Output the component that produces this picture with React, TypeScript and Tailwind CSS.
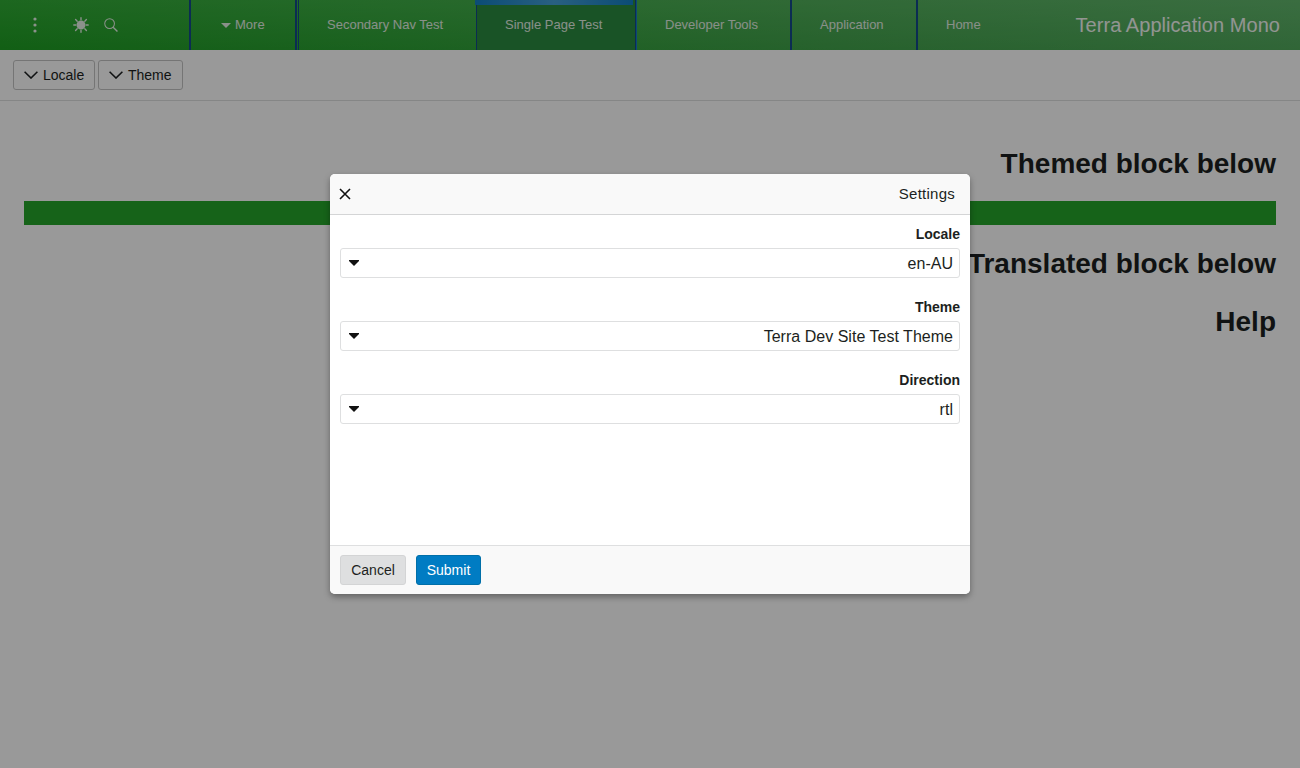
import React from "react";

const font = "font-['Liberation_Sans',Arial,sans-serif]";

function Tab({ label, className = "", children }: { label: string; className?: string; children?: React.ReactNode }) {
  return (
    <div className={`relative flex h-full items-center text-[13px] text-[#e4f0e4] ${className}`}>
      {children}
      {label}
    </div>
  );
}

function Chevron() {
  return (
    <svg width="14" height="8" viewBox="0 0 14 8" fill="none" stroke="currentColor" strokeWidth="1.6">
      <path d="M0.6 0.8 L7 7 L13.4 0.8" />
    </svg>
  );
}

function ToolButton({ label, className }: { label: string; className: string }) {
  return (
    <button className={`flex h-[30px] items-center gap-[5px] rounded-[3px] border border-[#c4c4c4] bg-white pl-[10px] text-[14px] text-[#1c1f21] ${className}`}>
      <Chevron />
      {label}
    </button>
  );
}

function Field({ label, value, className = "" }: { label: string; value: string; className?: string }) {
  return (
    <div className={className}>
      <div className="h-[23px] text-right text-[14px] leading-[18px] font-bold text-[#1c1f21]">{label}</div>
      <div className="flex h-[30px] items-center justify-between rounded-[3px] border border-[#dedfe0] bg-white pl-[8px] pr-[6px] text-[16px] text-[#1c1f21]">
        <svg width="10" height="6" viewBox="0 0 10 6">
          <path d="M0 0 H10 V1 L5 6 L0 1 Z" fill="#111" />
        </svg>
        <span className="pt-px tracking-[0.02px]">{value}</span>
      </div>
    </div>
  );
}

export default function App() {
  return (
    <div className={`relative h-[768px] w-[1300px] overflow-hidden bg-white ${font}`}>
      <header className="flex h-[50px] items-center bg-[linear-gradient(180deg,rgba(255,255,255,0.08),rgba(0,0,0,0.04)),linear-gradient(90deg,#1fa524_0%,#2ea836_30%,#44a94e_65%,#54b060_100%)] text-white">
        <div className="flex h-full w-[189px] items-center">
          <svg className="ml-[33px]" width="4" height="16" viewBox="0 0 4 16" fill="#e8f2e8">
            <circle cx="2" cy="2" r="1.6" />
            <circle cx="2" cy="8" r="1.6" />
            <circle cx="2" cy="14" r="1.6" />
          </svg>
          <svg className="ml-[36px]" width="16" height="16" viewBox="0 0 16 16" fill="#e8f2e8" stroke="#e8f2e8" strokeWidth="1.4" strokeLinecap="round">
            <circle cx="8" cy="8" r="3.8" />
            <path d="M8 .8v2M8 13.2v2M.8 8h2M13.2 8h2M2.6 2.6l1.6 1.6M11.8 11.8l1.6 1.6M2.6 13.4l1.6-1.6M11.8 4.2l1.6-1.6" />
          </svg>
          <svg className="ml-[15px]" width="14" height="14" viewBox="0 0 15 15" fill="none" stroke="#e8f2e8" strokeWidth="1.1">
            <circle cx="6" cy="6" r="5.2" />
            <path d="M9.8 9.8 14.4 14.4" strokeWidth="1.5" />
          </svg>
        </div>
        <Tab label="More" className="w-[108px] gap-[4px] border-x-2 border-[#134a8a] pl-[30px]">
          <svg width="10" height="5" viewBox="0 0 10 5">
            <path d="M0 0 H10 L5 5 Z" fill="#e4f0e4" />
          </svg>
        </Tab>
        <Tab label="Secondary Nav Test" className="ml-[1px] w-[178px] border-l border-[#134a8a] pl-[28px]" />
        <Tab label="Single Page Test" className="w-[160px] border-x border-[#134a8a] bg-[#2a8a40] pl-[28px]">
          <span className="absolute -left-[2px] right-[2px] top-0 h-[5px] bg-[linear-gradient(90deg,#137fc4,#45a0d8,#137fc4)]" />
        </Tab>
        <Tab label="Developer Tools" className="w-[154px] border-l border-[#1478c8] pl-[28px]" />
        <Tab label="Application" className="w-[126px] border-l-2 border-[#134a8a] pl-[28px]" />
        <Tab label="Home" className="w-[95px] border-l-2 border-[#134a8a] pl-[28px]" />
        <div className="flex-1 pr-[20px] text-right text-[20px] tracking-[0.045px] text-[#f4f8f4]">Terra Application Mono</div>
      </header>

      <div className="flex h-[51px] items-center gap-[3px] border-b border-[#dedfe0] pl-[13px]">
        <ToolButton label="Locale" className="w-[82px]" />
        <ToolButton label="Theme" className="w-[85px]" />
      </div>

      <main className="px-[24px] pt-[47px] text-right text-[#1c1f21]">
        <h1 className="text-[28px] leading-[32px] font-bold">Themed block below</h1>
        <div className="mt-[21px] h-[24px] bg-[#26a52a]" />
        <h1 className="mt-[23px] text-[28px] leading-[32px] font-bold">Translated block below</h1>
        <h1 className="mt-[26px] text-[28px] leading-[32px] font-bold">Help</h1>
      </main>

      <div className="absolute inset-0 flex items-center justify-center bg-black/40">
        <div className="flex h-[420px] w-[640px] flex-col overflow-hidden rounded-[5px] bg-white shadow-[0_3px_6px_rgba(0,0,0,0.35)]">
          <div className="flex h-[41px] shrink-0 items-center justify-between border-b border-[#d4d5d6] bg-[#f9f9f9] pl-[8px] pr-[15px]">
            <svg width="14" height="14" viewBox="0 0 14 14" fill="none" stroke="#111" strokeWidth="1.6">
              <path d="M2 2 L12 12 M12 2 L2 12" />
            </svg>
            <span className="text-[15px] tracking-[0.25px] text-[#1c1f21]">Settings</span>
          </div>
          <div className="flex-1 px-[10px] pt-[10px]">
            <Field label="Locale" value="en-AU" />
            <Field label="Theme" value="Terra Dev Site Test Theme" className="mt-[20px]" />
            <Field label="Direction" value="rtl" className="mt-[20px]" />
          </div>
          <div className="flex h-[49px] shrink-0 items-center gap-[10px] border-t border-[#dedfe0] bg-[#f9f9f9] pl-[10px]">
            <button className="h-[30px] w-[66px] rounded-[3px] border border-[#d3d4d5] bg-[#dedfe0] text-[14px] text-[#1c1f21]">Cancel</button>
            <button className="h-[30px] w-[65px] rounded-[3px] border border-[#006fa8] bg-[#007cc3] text-[14px] text-white">Submit</button>
          </div>
        </div>
      </div>
    </div>
  );
}
